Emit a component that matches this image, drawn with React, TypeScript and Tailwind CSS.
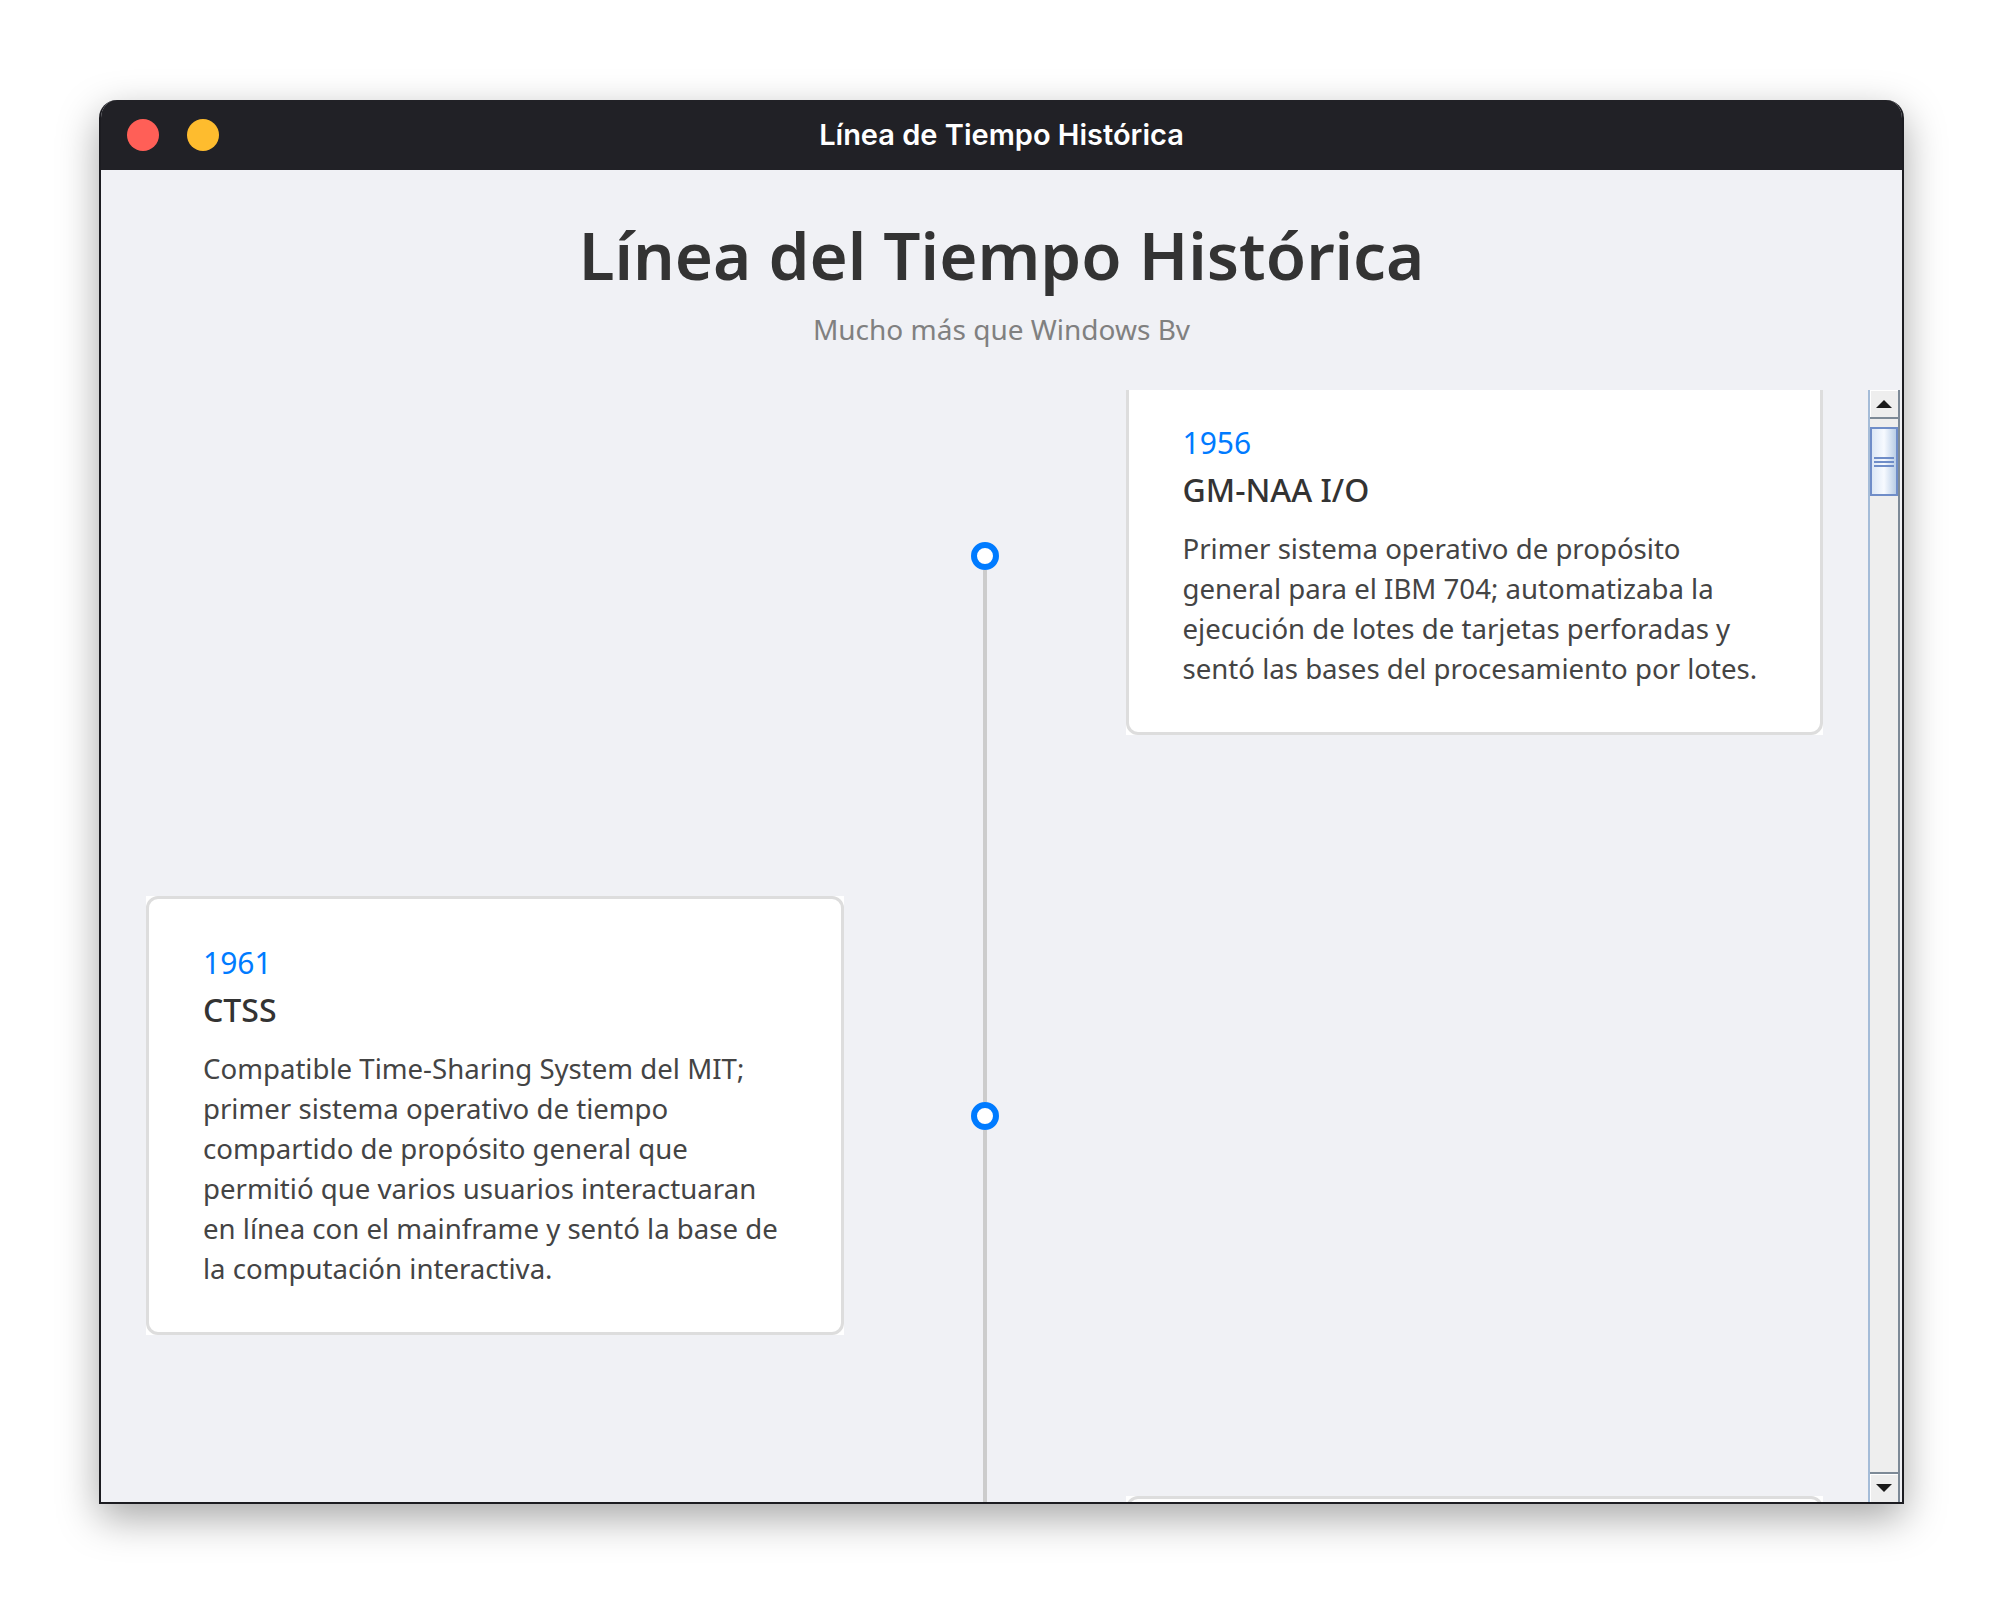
import React from 'react';

const events = [
  {
    year: '1956',
    name: 'GM-NAA I/O',
    text: 'Primer sistema operativo de propósito general para el IBM 704; automatizaba la ejecución de lotes de tarjetas perforadas y sentó las bases del procesamiento por lotes.',
    side: 'right',
  },
  {
    year: '1961',
    name: 'CTSS',
    text: 'Compatible Time-Sharing System del MIT; primer sistema operativo de tiempo compartido de propósito general que permitió que varios usuarios interactuaran en línea con el mainframe y sentó la base de la computación interactiva.',
    side: 'left',
  },
  {
    year: '1964',
    name: 'OS/360',
    text: 'Sistema operativo de IBM para la familia System/360; introdujo una misma plataforma de software para toda una línea de computadoras.',
    side: 'right',
  },
];

type Event = (typeof events)[number];

function Card({ ev }: { ev: Event }) {
  // Swing-style: opaque square panel with a rounded line border drawn on top
  return (
    <div className="bg-white">
      <div className="rounded-[12px] border-[3px] border-[#dddddd] px-[54px] py-[44px]">
        <div className="text-[30px] leading-[40px] text-[#007bff]">{ev.year}</div>
        <div className="mt-[7px] text-[32px] font-medium leading-[40px] text-[#333333]">{ev.name}</div>
        <p className="mt-[18px] text-[27.6px] leading-[40px] text-[#444444]">{ev.text}</p>
      </div>
    </div>
  );
}

function Row({ ev, first }: { ev: Event; first: boolean }) {
  return (
    <div className="grid grid-cols-[1fr_282px_1fr]">
      <div>{ev.side === 'left' && <Card ev={ev} />}</div>
      <div className="flex flex-col items-center">
        <div className={first ? 'w-[4px] flex-1' : 'w-[4px] flex-1 bg-[#cccccc]'} />
        <div className="h-[28px] w-[28px] shrink-0 rounded-full border-[6px] border-[#007bff] bg-white" />
        <div className="w-[4px] flex-1 bg-[#cccccc]" />
      </div>
      <div>{ev.side === 'right' && <Card ev={ev} />}</div>
    </div>
  );
}

function ScrollBar() {
  return (
    <div className="flex w-[34px] shrink-0 pr-[2px]">
      <div className="flex w-[32px] flex-col border-l-[2px] border-r-[2px] border-l-[#a4bcd8] border-r-[#7d8a97] bg-[#eeeeee]">
        <div className="flex h-[29px] items-center justify-center border-b-[2px] border-[#7d8a97] bg-[#eeeeee] shadow-[inset_1px_1px_0_#ffffff]">
          <div className="h-0 w-0 border-x-[8px] border-b-[8px] border-x-transparent border-b-[#1a1a1a]" />
        </div>
        <div className="mt-[8px] flex h-[69px] flex-col items-center justify-center gap-[2px] border-[2px] border-[#6f8dc8] bg-gradient-to-r from-[#dce7f5] via-[#f7faff] to-[#b9cde6]">
          <div className="h-[2px] w-[20px] bg-[#6f8dc8]" />
          <div className="h-[2px] w-[20px] bg-[#6f8dc8]" />
          <div className="h-[2px] w-[20px] bg-[#6f8dc8]" />
        </div>
        <div className="flex-1" />
        <div className="flex h-[30px] items-center justify-center border-t-[2px] border-[#7d8a97] bg-[#eeeeee] shadow-[inset_1px_1px_0_#ffffff]">
          <div className="h-0 w-0 border-x-[8px] border-t-[8px] border-x-transparent border-t-[#1a1a1a]" />
        </div>
      </div>
    </div>
  );
}

export default function App() {
  return (
    <div className="min-h-[1604px] w-[2004px] bg-white pl-[99px] pt-[100px] font-['Noto_Sans',sans-serif]">
      <div className="flex h-[1404px] w-[1805px] flex-col overflow-hidden rounded-t-[18px] border-x-[2px] border-b-[2px] border-[#1c1c21] bg-[#f0f1f5] shadow-[0_14px_40px_rgba(0,0,0,0.35)]">
        {/* title bar */}
        <div className="relative flex h-[70px] shrink-0 items-center bg-[#212126] pl-[26px]">
          <div className="flex gap-[28px]">
            <div className="h-[32px] w-[32px] rounded-full bg-[#ff5f57]" />
            <div className="h-[32px] w-[32px] rounded-full bg-[#febc2e]" />
          </div>
          <div className="absolute inset-0 flex items-center justify-center font-['Inter',sans-serif] text-[29px] font-semibold text-white">
            Línea de Tiempo Histórica
          </div>
        </div>

        {/* header */}
        <div className="flex h-[220px] shrink-0 flex-col items-center pt-[45px]">
          <h1 className="text-[65.5px] font-semibold leading-[80px] text-[#333333]">Línea del Tiempo Histórica</h1>
          <p className="mt-[16px] text-[28px] leading-[36px] text-[#808080]">Mucho más que Windows Bv</p>
        </div>

        {/* scroll pane */}
        <div className="flex min-h-0 flex-1">
          <div className="min-w-0 flex-1 overflow-hidden">
            <div className="-mt-[14px] flex flex-col px-[45px]">
              {events.map((ev, i) => (
                <React.Fragment key={ev.year}>
                  <Row ev={ev} first={i === 0} />
                  <div className="flex h-[161px] justify-center">
                    <div className="w-[4px] bg-[#cccccc]" />
                  </div>
                </React.Fragment>
              ))}
            </div>
          </div>
          <ScrollBar />
        </div>
      </div>
    </div>
  );
}
